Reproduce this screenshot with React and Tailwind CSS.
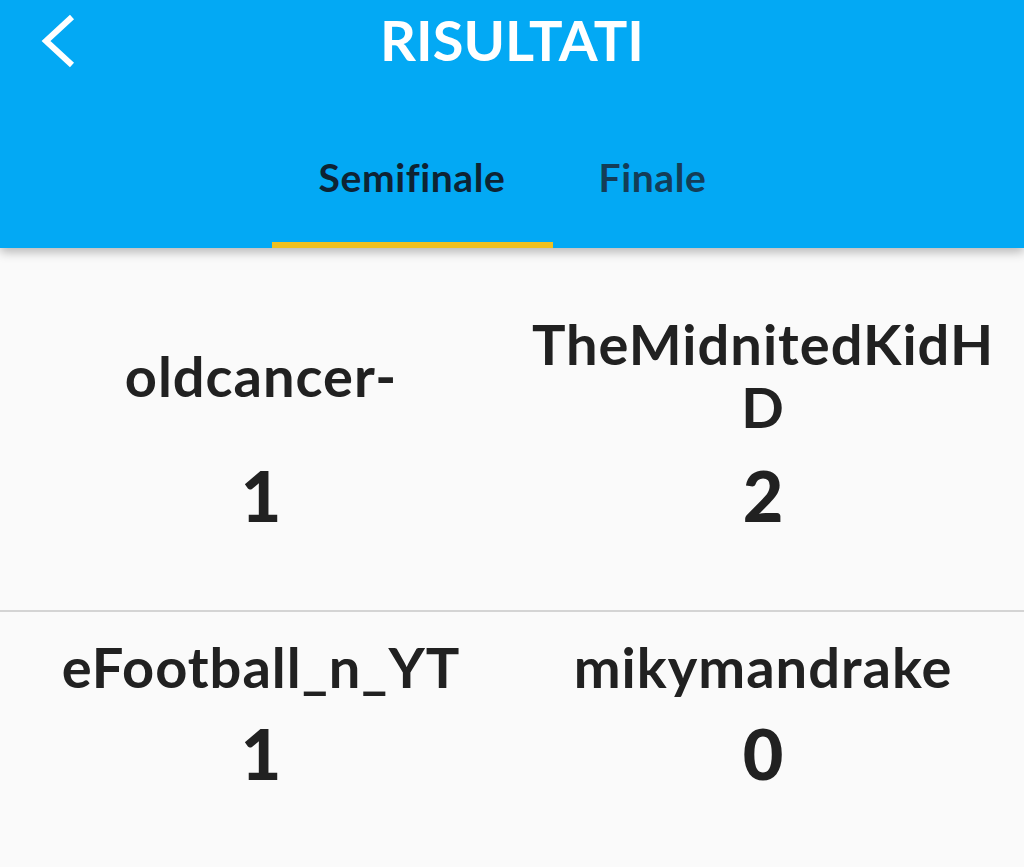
import React, { useState } from "react";

const matches = [
  { home: "oldcancer-", away: "TheMidnitedKidHD", homeScore: 1, awayScore: 2, pad: "pt-[64px] pb-[80px]", gap: "mt-[22px]" },
  { home: "eFootball_n_YT", away: "mikymandrake", homeScore: 1, awayScore: 0, pad: "pt-[23px] pb-[80px]", gap: "mt-[20px]" },
];

const BackIcon = () => (
  <svg width="40" height="60" viewBox="0 0 40 60" fill="none">
    <polyline points="32,8 6,32 32,56" stroke="white" strokeWidth="6" strokeLinecap="butt" strokeLinejoin="miter" />
  </svg>
);

const App = () => {
  const [tab, setTab] = useState(0);

  return (
    <div className="min-h-screen w-full bg-[#fafafa] font-['Lato',sans-serif] text-[#212121]">
      {/* HEADER */}
      <div className="relative z-10 bg-[#03a9f4] shadow-[0_4px_10px_rgba(0,0,0,0.28)]">
        <div className="grid h-[130px] grid-cols-[1fr_auto_1fr] items-start">
          <div className="pl-[40px] pt-[9px]">
            <BackIcon />
          </div>
          <h1 className="pt-[12px] text-[56px] font-bold leading-none text-white">RISULTATI</h1>
          <div />
        </div>

        {/* TABS */}
        <div className="flex h-[118px] justify-center">
          {["Semifinale", "Finale"].map((label, i) => (
            <button
              key={label}
              onClick={() => setTab(i)}
              className={
                "flex h-full flex-col items-center pt-[28px] " +
                (i === 0 ? "w-[281px]" : "w-[200px]")
              }
            >
              <span
                className={
                  "text-[39px] font-bold leading-none tracking-[0.6px] " +
                  (tab === i ? "text-[#0e2333]" : "text-[#143d57]")
                }
              >
                {label}
              </span>
              <div className={"mt-auto h-[6px] w-full " + (tab === i ? "bg-[#f0c020]" : "bg-transparent")} />
            </button>
          ))}
        </div>
      </div>

      {/* RESULTS */}
      <div>
        {matches.map((m, idx) => (
          <div
            key={idx}
            className={"grid grid-cols-2 px-[10px] text-center " + m.pad + (idx === 0 ? " border-b-2 border-[#d4d4d4]" : "")}
          >
            <div className="flex items-center justify-center" style={{ height: idx === 0 ? 126 : 63 }}>
              <p className="text-[56px] font-bold leading-[63px] tracking-[1px] break-all">{m.home}</p>
            </div>
            <div className="flex items-center justify-center px-[14px]" style={{ height: idx === 0 ? 126 : 63 }}>
              <p className="text-[56px] font-bold leading-[63px] tracking-[1px] break-all">{m.away}</p>
            </div>
            <p className={"text-[70px] font-black leading-none " + m.gap}>{m.homeScore}</p>
            <p className={"text-[70px] font-black leading-none " + m.gap}>{m.awayScore}</p>
          </div>
        ))}
      </div>
    </div>
  );
};

export default App;
